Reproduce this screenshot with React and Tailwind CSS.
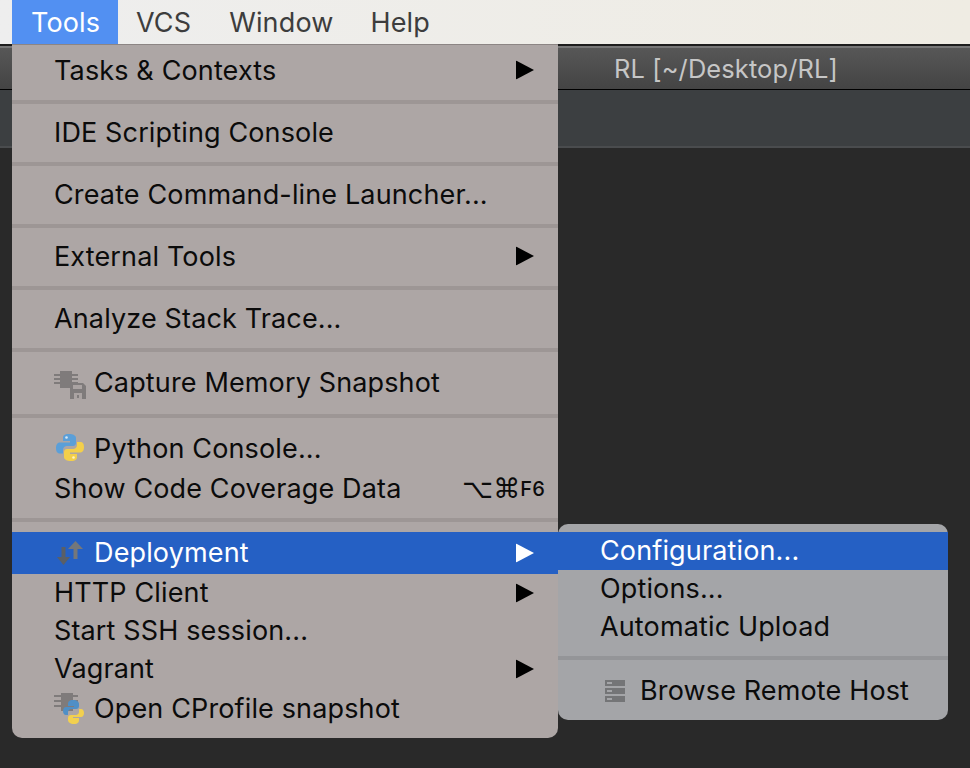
const font = { fontFamily: '"Inter","Liberation Sans",sans-serif', letterSpacing: "0.14px" };

function Arrow({ white }) {
  return (
    <svg width="18" height="19" viewBox="0 0 18 19" className="absolute right-[24px] top-1/2 -translate-y-1/2">
      <path d="M0 0L18 9.500L0 19Z" fill={white ? "#ffffff" : "#000000"} />
    </svg>
  );
}

function ChipIcon() {
  return (
    <svg width="34" height="34" viewBox="0 0 34 34" className="absolute left-[41px] top-1/2 -translate-y-1/2">
      <g fill="#7f7b7b">
        <rect x="7" y="6" width="12" height="17" />
        <rect x="1" y="9" width="24" height="2" />
        <rect x="1" y="13" width="24" height="2" />
        <rect x="1" y="17" width="24" height="2" />
      </g>
      <path d="M17 18H30L33 21V34H17Z" fill="#7f7b7b" />
      <rect x="20" y="20" width="9" height="4" fill="#aaa3a2" />
      <rect x="21" y="28" width="8" height="6" fill="#aaa3a2" />
      <rect x="24" y="30" width="2" height="3" fill="#7f7b7b" />
    </svg>
  );
}

function PythonIcon({ x = 43, size = 30 }) {
  return (
    <svg width={size} height={size} viewBox="0 0 30 30" style={{ left: x }} className="absolute top-1/2 -translate-y-1/2">
      <path d="M14 1C9 1 8 3 8 5V8H15V9.5H5C2 9.5 1 12 1 15C1 18 2 20.500 5 20.500H8V17C8 14.500 10 13 12 13H18C20 13 21 11.500 21 10V5C21 2.500 18 1 14 1Z" fill="#5b9fd8" />
      <circle cx="11.500" cy="4.500" r="1.300" fill="#d8e8f4" />
      <path d="M16 28C21 28 22 26 22 24V21H15V19.500H25C28 19.500 29 17 29 14C29 11 28 9 25 9H22V12C22 14.500 20 16 18 16H12C10 16 9 17.500 9 19V24C9 26.500 12 28 16 28Z" fill="#f3cf4a" />
      <circle cx="18.500" cy="24.500" r="1.300" fill="#fff3c2" />
    </svg>
  );
}

function CProfileIcon() {
  return (
    <svg width="34" height="34" viewBox="0 0 34 34" className="absolute left-[41px] top-1/2 -translate-y-1/2">
      <g fill="#7f7b7b">
        <rect x="8" y="1" width="12" height="18" />
        <rect x="1" y="3" width="24" height="2" />
        <rect x="1" y="8" width="24" height="2" />
        <rect x="1" y="13" width="24" height="2" />
      </g>
      <path d="M20 8C16 8 15 10 15 12V14H21V15H13C11 15 10 17 10 19C10 21 11 23 13 23H15V20C15 18 17 17 18 17H23C25 17 26 16 26 14V12C26 10 24 8 20 8Z" fill="#4f8fc6" />
      <path d="M21 32C25 32 26 30 26 28V26H20V25H28C30 25 31 23 31 21C31 19 30 17 28 17H26V20C26 22 24 23 23 23H18C16 23 15 24 15 26V28C15 30 17 32 21 32Z" fill="#f2d04f" />
    </svg>
  );
}

function DeployIcon() {
  return (
    <svg width="28" height="26" viewBox="0 0 28 26" className="absolute left-[44px] top-1/2 -translate-y-1/2">
      <path d="M5.500 7H9.500V17H14L7.500 25L1 17H5.500Z" fill="#5a5f66" />
      <path d="M17.500 19V9H12L19.500 1L27 9H21.500V19Z" fill="#74777b" />
    </svg>
  );
}

function HostIcon() {
  return (
    <svg width="22" height="24" viewBox="0 0 22 24" className="absolute left-[46px] top-1/2 -translate-y-1/2">
      <g fill="#747577">
        <rect x="1" y="1" width="20" height="6" />
        <rect x="1" y="9" width="20" height="6" />
        <rect x="1" y="17" width="20" height="6" />
      </g>
      <g fill="#a4a5a8">
        <rect x="3" y="3" width="5" height="2" />
        <rect x="3" y="11" width="5" height="2" />
        <rect x="3" y="19" width="5" height="2" />
      </g>
    </svg>
  );
}

function Row({ h = "h-[38px]", indent = "pl-[43px]", active, children, arrow, icon, right, up }) {
  return (
    <div className={`relative flex items-center ${h} ${indent} ${up ? "pb-[2px]" : ""} ${active ? "bg-[#2560c4] text-white" : "text-[#0b0b0b]"}`}>
      {icon}
      <span className="-ml-px">{children}</span>
      {right}
      {arrow && <Arrow white={active} />}
    </div>
  );
}

function Sep({ color = "bg-[#9d9695]", top = "pt-[11px]", h = "h-[24px]" }) {
  return (
    <div className={`${h} ${top}`}>
      <div className={`h-[4px] ${color}`} />
    </div>
  );
}

export default function App() {
  return (
    <div style={font} className="relative w-[970px] h-[768px] overflow-hidden bg-[#292929] text-[27px] leading-none">
      <div className="flex h-[44px] pl-[12px] bg-gradient-to-r from-[#eeeeee] to-[#efece3] text-[#3d3d3d]">
        <div className="flex items-center w-[106px] pl-[19px] bg-[#5290f2] text-white">Tools</div>
        <div className="flex items-center pl-[19px] ml-[-1px]">VCS</div>
        <div className="flex items-center pl-[38px]">Window</div>
        <div className="flex items-center pl-[37px]">Help</div>
      </div>
      <div className="h-[2px] bg-[#1d1d1d]" />
      <div className="flex items-center h-[43px] pl-[614px] border-t-2 border-[#777777] bg-gradient-to-b from-[#575757] to-[#444444] text-[#c6c6c6] text-[25.4px]">
        RL [~/Desktop/RL]
      </div>
      <div className="h-[1px] bg-black" />
      <div className="h-[58px] border-b-2 border-[#4a4c4e] bg-[#3c3f41]" />

      <div className="absolute left-[12px] top-[44px] w-[546px] border-t border-[#8c8584] pt-[6px] pb-[8px] rounded-b-[10px] bg-[#ada6a5]">
        <Row arrow>Tasks &amp; Contexts</Row>
        <Sep />
        <Row>IDE Scripting Console</Row>
        <Sep />
        <Row>Create Command-line Launcher...</Row>
        <Sep />
        <Row arrow>External Tools</Row>
        <Sep />
        <Row>Analyze Stack Trace...</Row>
        <Sep />
        <Row h="h-[42px]" indent="pl-[83px]" icon={<ChipIcon />}>Capture Memory Snapshot</Row>
        <Sep />
        <Row h="h-[42px]" indent="pl-[83px]" icon={<PythonIcon x={43} />}>Python Console...</Row>
        <Row
          right={
            <span className="absolute right-[13px] top-1/2 -translate-y-1/2 flex items-center" style={{ fontFamily: '"DejaVu Sans",sans-serif' }}>
              <span className="text-[27px]">⌥⌘</span>
              <span className="text-[20px] font-medium" style={font}>F6</span>
            </span>
          }
        >
          Show Code Coverage Data
        </Row>
        <Sep h="h-[25px]" />
        <Row up h="h-[42px]" indent="pl-[83px]" active arrow icon={<DeployIcon />}>Deployment</Row>
        <Row up arrow>HTTP Client</Row>
        <Row up>Start SSH session...</Row>
        <Row up arrow>Vagrant</Row>
        <Row up h="h-[42px]" indent="pl-[83px]" icon={<CProfileIcon />}>Open CProfile snapshot</Row>
      </div>

      <div className="absolute left-[558px] top-[524px] w-[390px] py-[8px] rounded-[10px] bg-[#a4a5a8]">
        <Row up active>Configuration...</Row>
        <Row up>Options...</Row>
        <Row up>Automatic Upload</Row>
        <Sep color="bg-[#949598]" top="pt-[10px]" />
        <Row up h="h-[42px]" indent="pl-[83px]" icon={<HostIcon />}>Browse Remote Host</Row>
      </div>
    </div>
  );
}
